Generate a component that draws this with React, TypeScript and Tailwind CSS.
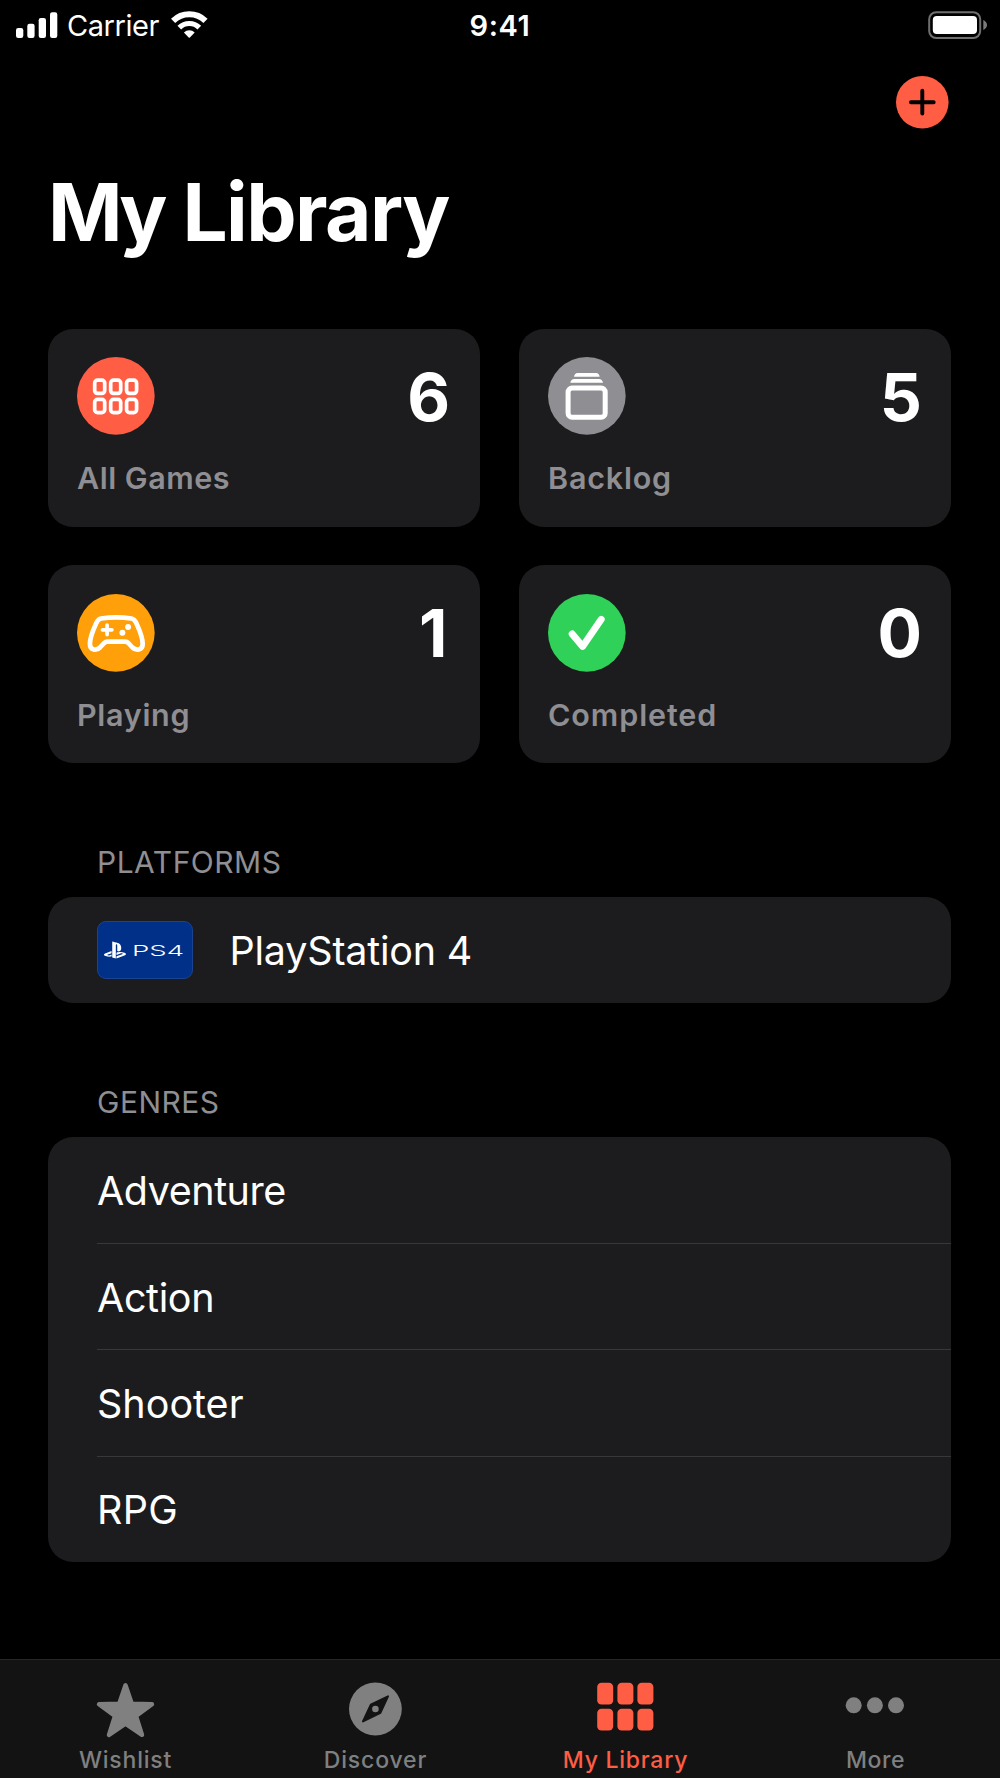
import type { ReactNode } from "react";
import { SiPlaystation } from "react-icons/si";

function StatusBar() {
  return (
    <header className="grid h-[50px] shrink-0 grid-cols-3 items-center pl-4 pr-[13px] text-[29px] leading-[50px]">
      <div className="flex items-center">
        <svg className="h-[50px] w-[42px]" viewBox="0 0 42 50" fill="#fff">
          <rect x="0" y="27" width="7.3" height="10" rx="2.2" />
          <rect x="11.3" y="22.7" width="7.3" height="14.3" rx="2.2" />
          <rect x="22.7" y="17" width="7.3" height="20" rx="2.2" />
          <rect x="34" y="11.3" width="7.3" height="25.7" rx="2.2" />
        </svg>
        <span className="ml-[9px] w-[103px] pt-px tracking-[-0.45px]">Carrier</span>
        <svg className="h-[50px] w-[38px]" viewBox="0 0 38 50" fill="none" stroke="#fff">
          <path d="M3.1 19.9A23.3 23.3 0 0 1 35.5 19.9" strokeWidth="6" />
          <path d="M9.3 26.6A14.2 14.2 0 0 1 29.3 26.6" strokeWidth="5.2" />
          <path d="M13.9 31.4A8 8 0 0 1 24.7 31.4L19.9 36.5Q19.3 37 18.7 36.5Z" fill="#fff" stroke="none" />
        </svg>
      </div>
      <span className="pt-px pr-[3px] text-center font-semibold tracking-[0.6px]">9:41</span>
      <svg className="h-[50px] w-[60px] justify-self-end" viewBox="0 0 60 50" fill="none">
        <rect x="2.2" y="11.2" width="51" height="25.8" rx="7" stroke="#6f6f6f" strokeWidth="2" />
        <rect x="5.8" y="15" width="44.2" height="18" rx="4" fill="#fff" />
        <path d="M56.3 19Q60 21 60 24T56.3 29Z" fill="#7b7b7b" />
      </svg>
    </header>
  );
}

function GridIcon() {
  return (
    <g stroke="#fff" strokeWidth="3.7" fill="none">
      {[17.7, 33.7, 49.6].map((x) =>
        [23.2, 42.4].map((y) => <rect key={`${x}-${y}`} x={x} y={y} width="10" height="13.2" rx="2.8" />),
      )}
    </g>
  );
}

function StackIcon() {
  return (
    <g fill="#fff">
      <path d="M26 19.7Q26.8 16 29.5 16H48.2Q50.9 16 51.7 19.7Z" />
      <path d="M22.3 25.7Q23.2 22 26.2 22H51.1Q54.1 22 55 25.7Z" />
      <rect x="20.1" y="31.1" width="37.1" height="29.1" rx="4" fill="none" stroke="#fff" strokeWidth="5" />
    </g>
  );
}

function GamepadIcon() {
  return (
    <g fill="none" stroke="#fff" strokeLinecap="round" strokeLinejoin="round">
      <path
        strokeWidth="4.7"
        d="M24 24.5Q39.3 22.2 54.6 24.5C57.5 25 58.3 27 59.5 29.5C62.5 36 65.7 44 65.7 50C65.7 56.5 59 57 55.5 53.5L51.3 49Q50 47.7 48.3 47.7H30.3Q28.6 47.7 27.3 49L23 53.5C19.5 57 12.9 56.5 12.9 50C12.9 44 16.1 36 19.1 29.5C20.3 27 21.1 25 24 24.5Z"
      />
      <path strokeWidth="3.7" d="M25.4 35.8H34.9M30.1 31.1V40.6" />
      <circle cx="51.1" cy="33" r="3" fill="#fff" stroke="none" />
      <circle cx="45.4" cy="38.7" r="3" fill="#fff" stroke="none" />
    </g>
  );
}

function CheckIcon() {
  return (
    <path d="M24.2 40L34.7 52.4L53.2 25.4" fill="none" stroke="#fff" strokeWidth="7" strokeLinecap="round" strokeLinejoin="round" />
  );
}

type StatCardProps = { label: string; count: number; disc: string; tracking: string; countClass?: string; children: ReactNode };

function StatCard({ label, count, disc, tracking, countClass = "", children }: StatCardProps) {
  return (
    <article className="h-[198px] rounded-[25px] bg-[#1c1c1e] px-[29px] pt-[28.8px]">
      <div className="flex items-center justify-between">
        <svg className="size-[77.7px] overflow-visible" viewBox="0 0 77.7 77.7">
          <circle cx="38.85" cy="38.85" r="38.85" className={disc} />
          {children}
        </svg>
        <span className={`pt-[1.5px] text-[66px] leading-[70px] font-bold ${countClass}`}>{count}</span>
      </div>
      <h2 className={`mt-[23.3px] text-[30.5px] leading-10 font-semibold text-[#8e8e93] ${tracking}`}>{label}</h2>
    </article>
  );
}

function Section({ title, children }: { title: string; children: ReactNode }) {
  return (
    <section className="mt-[79px]">
      <h3 className="mb-[15px] pl-[49px] text-[30px] leading-10 tracking-[0.5px] text-[#8e8e93]">{title}</h3>
      <div className="overflow-hidden rounded-[25px] bg-[#1c1c1e] pl-[49px] text-[39.5px] leading-[50px]">{children}</div>
    </section>
  );
}

const genres = [
  { name: "Adventure", style: "tracking-[-0.46px]" },
  { name: "Action", style: "tracking-[-0.36px]" },
  { name: "Shooter", style: "tracking-[0px]" },
  { name: "RPG", style: "tracking-[0.3px]" },
];

function Tab({ label, active = false, tracking, children }: { label: string; active?: boolean; tracking: string; children: ReactNode }) {
  return (
    <a className={`flex flex-1 flex-col items-center ${active ? "text-[#ff5d44]" : "text-[#808080]"}`}>
      <svg className="mt-[18.5px] h-[64px] w-[80px]" viewBox="0 0 80 64" fill="currentColor">
        {children}
      </svg>
      <span className={`mt-[4px] pl-px text-[23px] leading-[28px] font-medium ${tracking}`}>{label}</span>
    </a>
  );
}

export default function App() {
  return (
    <div className="flex h-[1778px] w-[1000px] flex-col overflow-hidden bg-black font-[Inter,sans-serif] text-white">
      <StatusBar />
      <div className="flex h-[104px] shrink-0 items-center justify-end pr-[51.4px]">
        <button aria-label="Add game">
          <svg className="size-[52.6px] overflow-visible" viewBox="0 0 52.6 52.6">
            <circle cx="26.3" cy="26.3" r="26.3" fill="#ff5d44" />
            <path d="M14.9 26.3H37.7M26.3 14.7V37.5" stroke="#000" strokeWidth="3.9" strokeLinecap="round" />
          </svg>
        </button>
      </div>
      <main className="pr-[49px] pl-12">
        <h1 className="h-[117px] text-[80px] leading-[116px] font-bold tracking-[-1.55px] [word-spacing:1.5px]">
          <span className="tracking-[-4px]">My</span> Library
        </h1>
        <div className="mt-[57.5px] grid grid-cols-2 gap-x-[39px] gap-y-[38.5px]">
          <StatCard label="All Games" count={6} disc="fill-[#ff5d44]" tracking="tracking-[0.5px]" countClass="pr-px">
            <GridIcon />
          </StatCard>
          <StatCard label="Backlog" count={5} disc="fill-[#8e8e93]" tracking="tracking-[0.8px]">
            <StackIcon />
          </StatCard>
          <StatCard label="Playing" count={1} disc="fill-[#ff9f0a]" tracking="tracking-[0.7px]" countClass="pr-[3.5px]">
            <GamepadIcon />
          </StatCard>
          <StatCard label="Completed" count={0} disc="fill-[#30d158]" tracking="tracking-[0.9px]">
            <CheckIcon />
          </StatCard>
        </div>
        <Section title="PLATFORMS">
          <div className="flex h-[106px] items-center">
            <div className="flex h-[58px] w-[96px] items-center rounded-[9px] border border-[#1c4390] bg-[#003087] pl-[6px]">
              <SiPlaystation className="size-[22px] shrink-0" />
              <svg className="ml-[6px] h-[20px] w-[54px]" viewBox="0 0 54 20" fill="#fff">
                <text x="0" y="15.5" fontSize="14.5" fontWeight="300" textLength="52" lengthAdjust="spacingAndGlyphs">
                  PS4
                </text>
              </svg>
            </div>
            <span className="ml-[36.5px] pt-[2px] tracking-[-0.21px]">PlayStation 4</span>
          </div>
        </Section>
        <Section title="GENRES">
          <ul className="[&>li+li]:border-t [&>li+li]:border-[#38383a]">
            {genres.map(({ name, style }) => (
              <li key={name} className="flex h-[106.2px] items-center">
                <span className={`pt-[2px] ${style}`}>{name}</span>
              </li>
            ))}
          </ul>
        </Section>
      </main>
      <nav className="mt-auto flex h-[119.5px] shrink-0 border-t border-[#262626] bg-[#131313]">
        <Tab label="Wishlist" tracking="tracking-[0.78px]">
          <path
            stroke="currentColor"
            strokeWidth="4.4"
            strokeLinejoin="round"
            d="M40.5 7.3L46.8 25.8L67 26.2L51 37.9L57 56.9L40.5 45.6L24 56.9L30 37.9L14 26.2L34.2 25.8Z"
          />
        </Tab>
        <Tab label="Discover" tracking="tracking-[0.84px]">
          <circle cx="40.4" cy="31" r="26.4" />
          <path d="M53 18.3L45.4 34.8L28 43.4L35.8 26.6Z" fill="#131313" stroke="#131313" strokeWidth="2" strokeLinejoin="round" />
          <circle cx="40.4" cy="31" r="3.3" />
        </Tab>
        <Tab label="My Library" active tracking="tracking-[0.74px]">
          {[12.2, 32.4, 52.4].map((x) =>
            [4.8, 30.8].map((y) => <rect key={`${x}-${y}`} x={x} y={y} width="16" height="21.8" rx="4.3" />),
          )}
        </Tab>
        <Tab label="More" tracking="tracking-[0.6px]">
          <circle cx="18.7" cy="27.3" r="8" />
          <circle cx="39.9" cy="27.3" r="8" />
          <circle cx="61" cy="27.3" r="8" />
        </Tab>
      </nav>
    </div>
  );
}
